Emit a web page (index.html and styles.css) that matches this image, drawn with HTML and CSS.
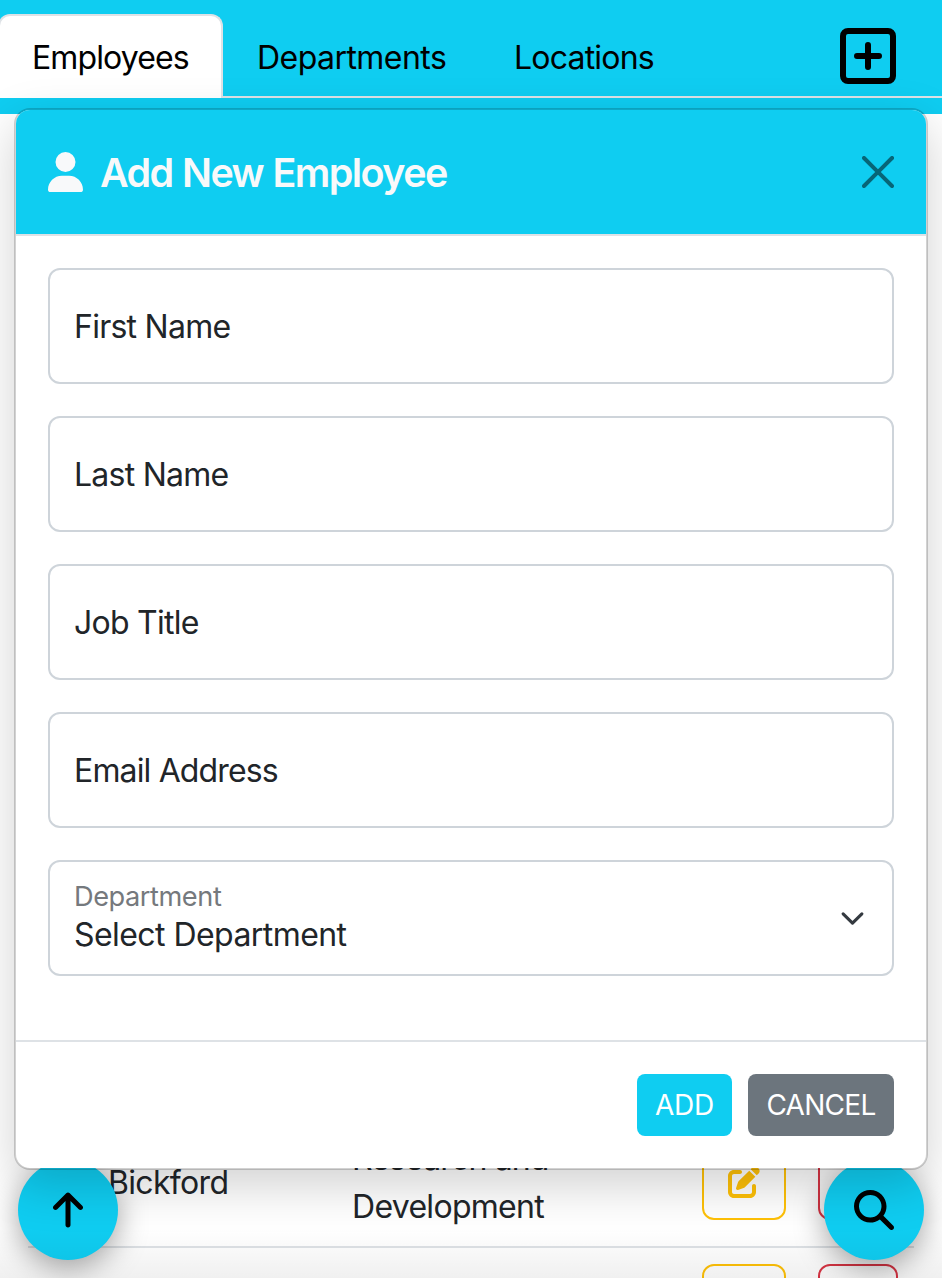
FILE: index.html
```html
<!DOCTYPE html>
<html lang="en">
<head>
<meta charset="utf-8">
<title>Company Directory</title>
<link rel="stylesheet" href="styles.css">
</head>
<body>
<header class="topbar">
  <nav class="tabs">
    <a class="tab tab-active"><span class="t-emp">Employees</span></a>
    <a class="tab"><span class="t-dep">Departments</span></a>
    <a class="tab"><span class="t-loc">Locations</span></a>
    <button class="add-btn" aria-label="Add">
      <svg width="56" height="56" viewBox="0 0 56 56" fill="none" stroke="#000" stroke-width="6" stroke-linecap="round"><rect x="3" y="3" width="50" height="50" rx="5"/><path d="M28 17v22M17 28h22"/></svg>
    </button>
  </nav>
</header>

<main class="directory">
  <div class="row">
    <div class="cell"><span class="t-bick">Bickford</span></div>
    <div class="cell"><span class="t-res">Research and</span><br><span class="t-dev">Development</span></div>
    <div class="btn-outline edit"><svg width="32" height="32" viewBox="0 0 512 512" fill="currentColor"><path d="M471.6 21.7c-21.9-21.9-57.3-21.9-79.2 0L362.3 51.7l97.9 97.9 30.1-30.1c21.9-21.9 21.9-57.3 0-79.2L471.6 21.7zm-299.2 220c-6.1 6.1-10.8 13.6-13.5 21.9l-29.6 88.8c-2.9 8.6-.6 18.1 5.8 24.6s15.9 8.7 24.6 5.8l88.8-29.6c8.2-2.7 15.7-7.4 21.9-13.5L437.7 172.3 339.7 74.3 172.4 241.7zM96 64C43 64 0 107 0 160V416c0 53 43 96 96 96H352c53 0 96-43 96-96V320c0-17.7-14.3-32-32-32s-32 14.3-32 32v96c0 17.7-14.3 32-32 32H96c-17.7 0-32-14.3-32-32V160c0-17.7 14.3-32 32-32h96c17.7 0 32-14.3 32-32s-14.3-32-32-32H96z"/></svg></div>
    <div class="btn-outline delete"></div>
  </div>
  <div class="row row-next">
    <div class="cell"></div>
    <div class="cell"></div>
    <div class="btn-outline edit"></div>
    <div class="btn-outline delete"></div>
  </div>
</main>

<button class="fab fab-left" aria-label="Back to top">
  <svg width="30" height="40" viewBox="0 0 384 512"><path d="M214.6 41.4c-12.5-12.5-32.8-12.5-45.3 0l-160 160c-12.5 12.5-12.5 32.8 0 45.3s32.8 12.5 45.3 0L160 141.2V448c0 17.7 14.3 32 32 32s32-14.3 32-32V141.2L329.4 246.6c12.5 12.5 32.8 12.5 45.3 0s12.5-32.8 0-45.3l-160-160z"/></svg>
</button>
<button class="fab fab-right" aria-label="Search">
  <svg width="40" height="40" viewBox="0 0 512 512"><path d="M416 208c0 45.9-14.9 88.3-40 122.7L502.6 457.4c12.5 12.5 12.5 32.8 0 45.3s-32.8 12.5-45.3 0L330.7 376c-34.4 25.2-76.8 40-122.7 40C93.1 416 0 322.9 0 208S93.1 0 208 0S416 93.1 416 208zM208 352a144 144 0 1 0 0-288 144 144 0 1 0 0 288z"/></svg>
</button>

<div class="page-shade"></div>

<section class="modal">
  <header class="modal-header">
    <svg width="35" height="40" viewBox="0 0 448 512" fill="#f8f9fa"><path d="M224 256A128 128 0 1 0 224 0a128 128 0 1 0 0 256zm-45.7 48C79.8 304 0 383.8 0 482.3C0 498.7 13.3 512 29.7 512H418.3c16.4 0 29.7-13.3 29.7-29.7C448 383.8 368.2 304 269.7 304H178.3z"/></svg>
    <h1 class="modal-title">Add New Employee</h1>
    <svg class="close" width="32" height="32" viewBox="0 0 16 16"><path d="M.293.293a1 1 0 0 1 1.414 0L8 6.586 14.293.293a1 1 0 1 1 1.414 1.414L9.414 8l6.293 6.293a1 1 0 0 1-1.414 1.414L8 9.414l-6.293 6.293a1 1 0 0 1-1.414-1.414L6.586 8 .293 1.707a1 1 0 0 1 0-1.414z"/></svg>
  </header>
  <div class="modal-body">
    <div class="field"><span class="t-first">First Name</span></div>
    <div class="field"><span class="t-last">Last Name</span></div>
    <div class="field"><span class="t-job">Job Title</span></div>
    <div class="field"><span class="t-email">Email Address</span></div>
    <div class="field">
      <div class="select-text">
        <span class="field-label">Department</span>
        <span class="t-select">Select Department</span>
      </div>
      <svg class="chevron" width="25" height="25" viewBox="0 0 16 16" fill="none" stroke="#343a40" stroke-width="2" stroke-linecap="round" stroke-linejoin="round"><path d="m2 5 6 6 6-6"/></svg>
    </div>
  </div>
  <footer class="modal-footer">
    <button class="btn btn-add"><span class="t-add">ADD</span></button>
    <button class="btn btn-cancel"><span class="t-cancel">CANCEL</span></button>
  </footer>
</section>
</body>
</html>
```
FILE: styles.css
```css
* { box-sizing: border-box; }
body {
  margin: 0;
  position: relative;
  height: 1278px;
  overflow: hidden;
  background: #fff;
  color: #212529;
  font: 400 32px/48px Inter, "Liberation Sans", sans-serif;
}
button { border: 0; padding: 0; margin: 0; background: none; font: inherit; }
svg { display: block; flex: none; }
span { white-space: nowrap; }

/* Per-label tracking */
.t-emp { letter-spacing: -.88px; }
.t-dep { letter-spacing: -.55px; }
.t-loc { letter-spacing: -.8px; }
.t-bick { letter-spacing: -.68px; }
.t-res { letter-spacing: -.85px; }
.t-dev { letter-spacing: -.7px; }
.t-first { letter-spacing: -.75px; }
.t-last { letter-spacing: -.75px; }
.t-job { letter-spacing: -.75px; }
.t-email { letter-spacing: -.85px; }
.t-select { letter-spacing: -.56px; }
.t-add { letter-spacing: -.3px; }
.t-cancel { letter-spacing: -.7px; }

.topbar { height: 114px; padding-top: 14px; background: #0fcdf1; overflow: hidden; }
.tabs {
  display: flex;
  height: 84px;
  margin-left: -2px;
  border-bottom: 2px solid #dee2e6;
}
.tab {
  height: 84px;
  padding: 18px 32px 14px;
  border: 2px solid transparent;
  border-bottom: 0;
  border-radius: 12px 12px 0 0;
  color: #000;
}
.tab-active { width: 225px; background: #fff; border-color: #dee2e6; }
.tab:nth-child(2) { width: 257px; }
.add-btn { width: 56px; height: 56px; margin: 14px 46px 0 auto; }

.directory { height: 1164px; padding: 1004px 28px 0; overflow: hidden; }
.row {
  display: grid;
  grid-template-columns: 244px 350px 84px 112px;
  width: 886px;
  height: 130px;
  padding: 16px 0 16px 80px;
  align-items: center;
  border-bottom: 2px solid #dee2e6;
}
.row .cell { margin: 1px 0 -1px; }
.row .delete { margin-left: 32px; width: 80px; }
.row-next { align-items: start; }
.btn-outline {
  display: flex;
  align-items: center;
  justify-content: center;
  height: 76px;
  border: 2px solid;
  border-radius: 12px;
}
.edit { color: #ffc107; }
.delete { color: #dc3545; }

.fab {
  position: absolute;
  top: 1160px;
  display: flex;
  align-items: center;
  justify-content: center;
  width: 100px;
  height: 100px;
  border-radius: 50%;
  background: #0fcdf1;
  box-shadow: 0 8px 30px rgba(0, 0, 0, .36);
}
.fab-left { left: 18px; }
.fab-right { left: 824px; }

.page-shade {
  position: absolute;
  inset: auto 0 0;
  height: 50px;
  background: linear-gradient(rgba(0, 0, 0, 0), rgba(0, 0, 0, .06));
}

.modal {
  position: absolute;
  top: 108px;
  left: 14px;
  display: flex;
  flex-direction: column;
  width: 914px;
  height: 1062px;
  border: 2px solid rgba(0, 0, 0, .175);
  border-radius: 16px;
  background: #fff;
  background-clip: padding-box;
  box-shadow: 0 16px 48px rgba(0, 0, 0, .18);
}
.modal-header {
  display: flex;
  align-items: center;
  height: 126px;
  padding: 0 32px;
  border-bottom: 2px solid #dee2e6;
  border-radius: 14px 14px 0 0;
  background: #0fcdf1;
  background-clip: padding-box;
}
.modal-title {
  margin: 2px 0 0 17px;
  color: #f8f9fa;
  font-size: 39.5px;
  line-height: 60px;
  font-weight: 600;
  letter-spacing: -1.6px;
  word-spacing: 1px;
  white-space: nowrap;
}
.close { margin-left: auto; opacity: .5; }
.modal-body {
  display: flex;
  flex-direction: column;
  gap: 32px;
  height: 804px;
  padding: 32px 32px 0;
}
.field {
  display: flex;
  align-items: center;
  justify-content: space-between;
  height: 116px;
  padding: 0 27px 0 24px;
  border: 2px solid #ced4da;
  border-radius: 12px;
}
.field > span { padding-top: 2px; }
.select-text { display: flex; flex-direction: column; padding-bottom: 4px; }
.select-text span { line-height: 38px; }
.select-text .field-label { color: #75797d; font-size: 27.2px; letter-spacing: -.45px; }
.modal-footer {
  display: flex;
  justify-content: flex-end;
  gap: 16px;
  padding: 32px;
  border-top: 2px solid #dee2e6;
}
.btn { height: 62px; border-radius: 8px; color: #fff; font-size: 28px; line-height: 62px; }
.btn-add { width: 95px; background: #0fcdf1; }
.btn-cancel { width: 146px; background: #6c757d; }
```
